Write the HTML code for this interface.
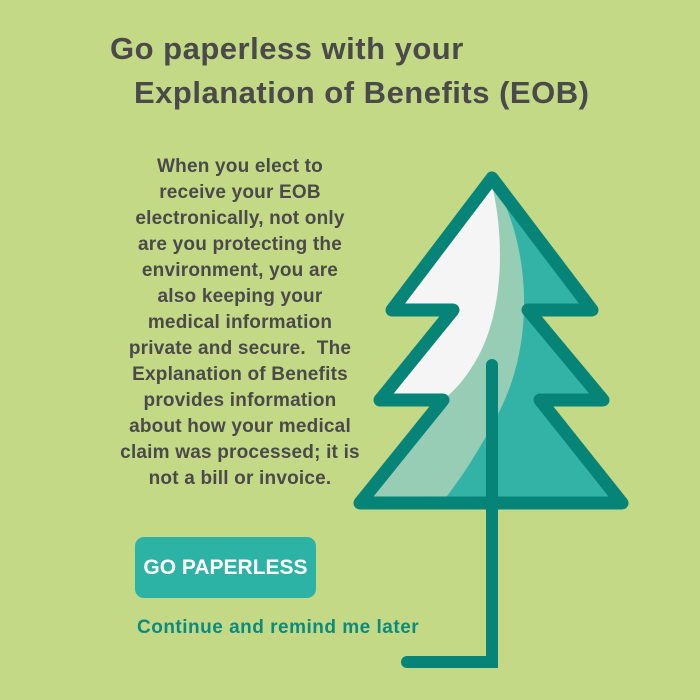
<!DOCTYPE html>
<html><head><style>
html,body{margin:0;padding:0}
body{width:700px;height:700px;background:#c4d985;position:relative;overflow:hidden;font-family:"Liberation Sans",sans-serif;color:#4a4a4a}
.t{position:absolute;font-weight:bold;font-size:31px;letter-spacing:0.5px;white-space:nowrap}
.body{position:absolute;left:80px;top:154px;width:320px;text-align:center;font-weight:bold;font-size:19px;line-height:26px;letter-spacing:0.2px;white-space:nowrap}
.btn{position:absolute;left:135px;top:537px;width:181px;height:61px;background:#2db3a6;border-radius:9px;color:#fff;font-weight:bold;font-size:21px;line-height:61px;text-align:center}
.lk{position:absolute;left:137px;top:617px;font-size:19px;letter-spacing:0.5px;color:#0d8a7e;font-weight:bold;white-space:nowrap}
svg{position:absolute;left:0;top:0}
</style></head><body>
<div class="t" style="left:110px;top:31px">Go paperless with your</div>
<div class="t" style="left:134px;top:75px">Explanation of Benefits (EOB)</div>
<div class="body">When you elect to<br>receive your EOB<br>electronically, not only<br>are you protecting the<br>environment, you are<br>also keeping your<br>medical information<br>private and secure.&nbsp; The<br>Explanation of Benefits<br>provides information<br>about how your medical<br>claim was processed; it is<br>not a bill or invoice.</div>
<div class="btn">GO PAPERLESS</div>
<div class="lk">Continue and remind me later</div>
<svg width="700" height="700">
<defs><clipPath id="c"><path d="M492,178 L592,310 L528,310 L603,400 L540,400 L622,503 L360,503 L443,400 L380,400 L453,310 L392,310 Z"/></clipPath></defs>
<g clip-path="url(#c)">
<rect x="350" y="170" width="290" height="340" fill="#33b3a6"/>
<path d="M492,180 C525,230 540,330 500,410 C480,450 460,480 440,505 L350,505 L350,170 Z" fill="#98cdb5"/>
<path d="M492,185 C505,240 505,320 470,370 C460,385 450,395 440,402 L350,402 L350,170 Z" fill="#f5f5f5"/>
</g>
<path d="M492,178 L592,310 L528,310 L603,400 L540,400 L622,503 L360,503 L443,400 L380,400 L453,310 L392,310 Z" fill="none" stroke="#078478" stroke-width="13" stroke-linejoin="round"/>
<path d="M492,365 L492,662 L407,662" fill="none" stroke="#078478" stroke-width="12" stroke-linecap="round"/>
</svg>
</body></html>
